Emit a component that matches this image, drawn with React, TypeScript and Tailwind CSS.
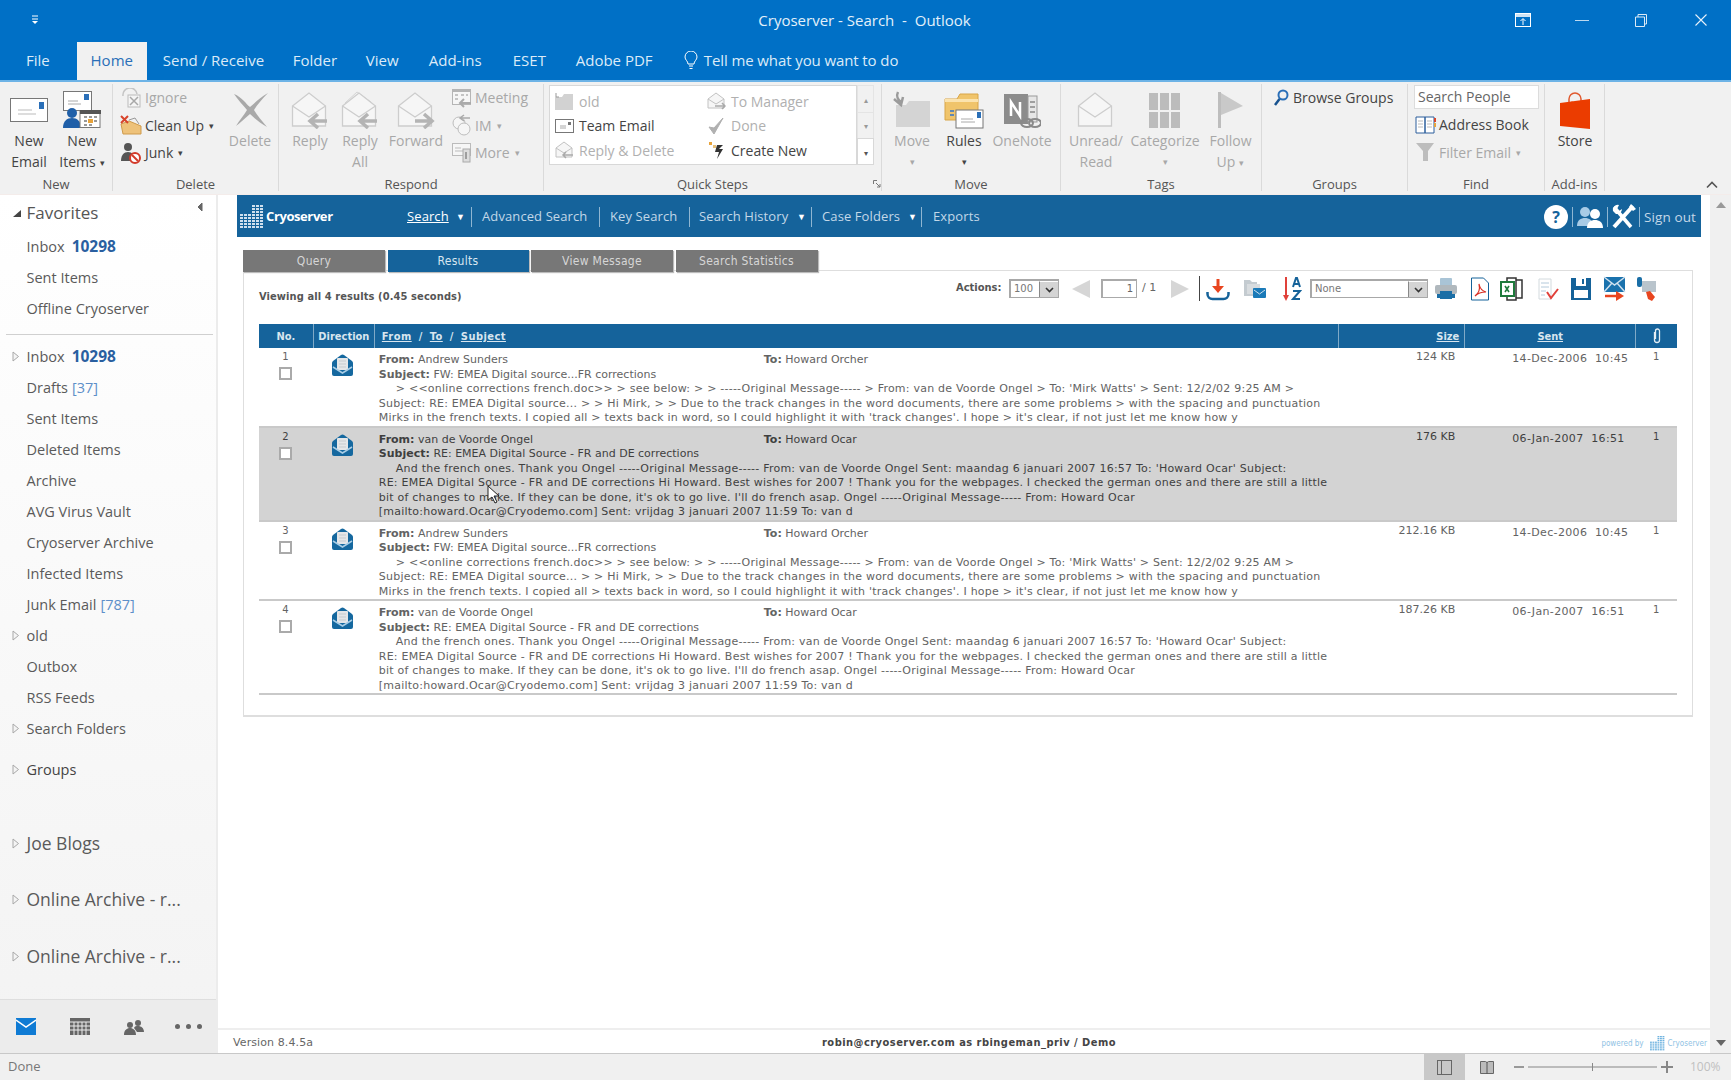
import { ReactNode } from 'react'

const ui = 'font-["Open_Sans","Noto_Sans",sans-serif]'
const web = 'font-["DejaVu_Sans","Noto_Sans",sans-serif]'
const cond = 'font-["DejaVu_Sans_Condensed","DejaVu_Sans",sans-serif]'

function Svg({ w, h, vb, children }: { w: number; h: number; vb: string; children: ReactNode }) {
  return (
    <svg width={w} height={h} viewBox={vb} fill="none" className="shrink-0 block">
      {children}
    </svg>
  )
}

/* ribbon icons */
const NewEmailIcon = () => (
  <Svg w={38} h={24} vb="0 0 38 24">
    <rect x="0.5" y="0.5" width="37" height="23" fill="#fff" stroke="#777" />
    <rect x="29" y="4" width="5" height="7" fill="#2a6fb8" />
    <path d="M8 12h14M8 16h18" stroke="#bbb" />
  </Svg>
)
const NewItemsIcon = () => (
  <Svg w={38} h={38} vb="0 0 38 38">
    <rect x="0.5" y="0.5" width="28" height="19" fill="#fff" stroke="#777" />
    <rect x="21" y="3" width="5" height="6" fill="#2a6fb8" />
    <path d="M5 10h10M5 13h13" stroke="#aaa" />
    <circle cx="9" cy="22" r="5" fill="#1f5fa8" />
    <path d="M0 37c0-7 4-10 9-10s9 3 9 10z" fill="#1f5fa8" />
    <rect x="17" y="19.5" width="20" height="17" fill="#fff" stroke="#777" />
    <rect x="17" y="19" width="21" height="4" fill="#555" />
    <path d="M21 26h3M26 26h3M31 26h3M21 30h3M31 30h3M21 34h3M26 34h3" stroke="#999" strokeWidth="2" />
    <rect x="25" y="28" width="5" height="4" fill="#e8a33a" />
  </Svg>
)
const IgnoreIcon = () => (
  <Svg w={22} h={20} vb="0 0 22 20">
    <path d="M3 8a7 7 0 0 1 14-2" stroke="#c4c4c4" strokeWidth="1.5" />
    <rect x="8" y="7" width="12" height="12" fill="#f5f5f5" stroke="#bbb" />
    <path d="M10 9l8 8M18 9l-8 8" stroke="#a8a8a8" strokeWidth="1.5" />
  </Svg>
)
const CleanUpIcon = () => (
  <Svg w={22} h={20} vb="0 0 22 20">
    <path d="M1 9l8-3 12 5v8H3z" fill="#eec27a" stroke="#cf9b4c" />
    <path d="M1 1l7 7M8 1L1 8" stroke="#d8442b" strokeWidth="2" />
    <path d="M9 5l6-2 4 6" stroke="#999" />
  </Svg>
)
const JunkIcon = () => (
  <Svg w={22} h={22} vb="0 0 22 22">
    <circle cx="8" cy="5" r="4" fill="#555" />
    <path d="M1 19c0-6 3-9 7-9s7 3 7 9z" fill="#555" />
    <circle cx="15" cy="16" r="5" fill="#fff" stroke="#d23a2a" strokeWidth="2" />
    <path d="M12 13l6 6" stroke="#d23a2a" strokeWidth="2" />
  </Svg>
)
const DeleteIcon = () => (
  <Svg w={37} h={36} vb="0 0 37 36">
    <path d="M2 2c8 3 12 10 16 13 5-4 9-9 18-14-6 6-11 12-14 17 3 5 8 11 13 17-7-4-13-9-17-13-5 4-10 9-14 12 3-5 8-11 11-16C11 13 6 8 2 2z" fill="#a9a9a9" />
  </Svg>
)
const MailAction = ({ dir = 'left', extra = false }: { dir?: 'left' | 'right' | 'none'; extra?: boolean }) => (
  <Svg w={38} h={38} vb="0 0 38 38">
    {extra && <path d="M4 12L16 1l14 10" stroke="#d4d4d4" />}
    <path d="M1.5 15L18 2l16.500 13v20h-33z" fill="#f6f6f6" stroke="#cdcdcd" strokeWidth="1.300" />
    <path d="M1.5 15L18 26l16.500-11" stroke="#cdcdcd" strokeWidth="1.300" fill="none" />
    {dir === 'left' && <path d="M36 30H20M27 23l-8 7 8 7" stroke="#b4b4b4" strokeWidth="3.500" />}
    {dir === 'right' && <path d="M18 30h16M27 23l8 7-8 7" stroke="#b4b4b4" strokeWidth="3.500" />}
  </Svg>
)
const MeetingIcon = () => (
  <Svg w={21} h={20} vb="0 0 21 20">
    <rect x="1.5" y="1.500" width="18" height="15" fill="#f6f6f6" stroke="#b5b5b5" />
    <rect x="1" y="1" width="19" height="3" fill="#b5b5b5" />
    <path d="M4 7h3M10 7h3M15 7h2M4 11h3" stroke="#c4c4c4" strokeWidth="2" />
    <path d="M20 15H9M13 11l-4 4 4 4" stroke="#aaa" strokeWidth="2" />
  </Svg>
)
const ImIcon = () => (
  <Svg w={21} h={22} vb="0 0 21 22">
    <circle cx="8" cy="9" r="6" stroke="#bdbdbd" fill="#f6f6f6" />
    <circle cx="13" cy="15" r="6" stroke="#bdbdbd" fill="#f6f6f6" />
    <path d="M19 4H10M13 1L9 4l4 3" stroke="#aaa" strokeWidth="1.500" />
  </Svg>
)
const MoreIcon = () => (
  <Svg w={21} h={21} vb="0 0 21 21">
    <rect x="1.500" y="1.500" width="18" height="12" fill="#f6f6f6" stroke="#bbb" />
    <path d="M4 6h6M4 9h8" stroke="#bbb" />
    <rect x="12" y="7" width="7" height="13" fill="#ddd" stroke="#aaa" />
    <path d="M15 10v7" stroke="#888" strokeWidth="1.500" />
  </Svg>
)
const FolderGray = () => (
  <Svg w={18} h={17} vb="0 0 18 17">
    <path d="M3 4h4l2-3h9v16H0V4z" fill="#d2d2d2" />
    <path d="M1 0v4h3" stroke="#999" />
  </Svg>
)
const TeamEmailIcon = () => (
  <Svg w={19} h={14} vb="0 0 19 14">
    <rect x="0.500" y="0.500" width="18" height="13" fill="#fff" stroke="#777" />
    <rect x="13" y="3" width="3" height="3" fill="#777" />
    <path d="M5 7h6M5 9h6" stroke="#aaa" />
  </Svg>
)
const ReplyDeleteIcon = () => (
  <Svg w={19} h={18} vb="0 0 19 18">
    <path d="M1 7l8-6 8 6v9H1z" fill="#f6f6f6" stroke="#c2c2c2" />
    <path d="M1 7l8 5 8-5" stroke="#c2c2c2" />
    <path d="M18 14H8M11 11l-3 3 3 3" stroke="#aaa" strokeWidth="1.500" />
  </Svg>
)
const ToManagerIcon = () => (
  <Svg w={19} h={18} vb="0 0 19 18">
    <path d="M1 7l8-6 8 6v9H1z" fill="#f6f6f6" stroke="#c2c2c2" />
    <path d="M1 7l8 5 8-5" stroke="#c2c2c2" />
    <path d="M8 14h10M15 11l3 3-3 3" stroke="#aaa" strokeWidth="1.500" />
  </Svg>
)
const DoneIcon = () => (
  <Svg w={17} h={18} vb="0 0 17 18">
    <path d="M1 10l5 7L15 1 6 11z" fill="#b0b0b0" stroke="#b0b0b0" />
  </Svg>
)
const CreateNewIcon = () => (
  <Svg w={17} h={19} vb="0 0 17 19">
    <rect x="1" y="1" width="3" height="3" fill="#e8a33a" />
    <rect x="5" y="4" width="3" height="3" fill="#e8c07a" />
    <path d="M15 4H9L7 11h4l-2 7 6-10h-4z" fill="#333" />
  </Svg>
)
const MoveIcon = () => (
  <Svg w={38} h={38} vb="0 0 38 38">
    <path d="M3 14h10l3-4h21v26H3z" fill="#d4d4d4" />
    <path d="M5 1c-2 4 0 8 3 10M1 8l7 6 2-8" stroke="#9b9b9b" strokeWidth="2.500" />
  </Svg>
)
const RulesIcon = () => (
  <Svg w={40} h={38} vb="0 0 40 38">
    <path d="M1 8h12l3-5h18v26H1z" fill="#f0c46b" stroke="#d8a548" />
    <rect x="1" y="8" width="33" height="3" fill="#fbe3ae" />
    <rect x="12" y="19" width="27" height="18" fill="#fff" stroke="#777" />
    <rect x="33" y="21" width="4" height="6" fill="#2a6fb8" />
    <path d="M17 28h12M17 31h14" stroke="#aaa" />
    <path d="M6 20h4M6 24h4" stroke="#5f88b5" strokeWidth="2" />
  </Svg>
)
const OneNoteIcon = () => (
  <Svg w={38} h={38} vb="0 0 38 38">
    <rect x="1" y="3" width="24" height="30" fill="#8c8c8c" />
    <path d="M8 25V11l9 14V11" stroke="#fff" strokeWidth="2.500" />
    <rect x="25" y="5" width="9" height="26" fill="#e6e6e6" stroke="#999" />
    <path d="M27 11h5M27 16h5M27 21h5" stroke="#888" strokeWidth="1.500" />
    <ellipse cx="24" cy="32" rx="6" ry="4" stroke="#8a8a8a" strokeWidth="2" />
    <ellipse cx="32" cy="32" rx="6" ry="4" stroke="#8a8a8a" strokeWidth="2" />
  </Svg>
)
const CategorizeIcon = () => (
  <Svg w={32} h={35} vb="0 0 32 35">
    <path d="M0 0h9v17H0zM11 0h9v17h-9zM22 0h9v17h-9zM0 19h9v16H0zM11 19h9v16h-9zM22 19h9v16h-9z" fill="#bcbcbc" />
  </Svg>
)
const FollowIcon = () => (
  <Svg w={27} h={36} vb="0 0 27 36">
    <path d="M1 0h3v36H1z" fill="#bdbdbd" />
    <path d="M4 1l22 13L4 23z" fill="#c9c9c9" />
  </Svg>
)
const BrowseIcon = () => (
  <Svg w={16} h={18} vb="0 0 16 18">
    <circle cx="10" cy="6" r="4.500" stroke="#2a6fb8" strokeWidth="2" />
    <path d="M6.500 10L2 16" stroke="#17528f" strokeWidth="2.500" />
  </Svg>
)
const AddressBookIcon = () => (
  <Svg w={21} h={18} vb="0 0 21 18">
    <path d="M1 1h9v16H1zM10 1h9v16h-9z" fill="#fff" stroke="#2d5f9c" />
    <path d="M3 5h5M3 8h5M3 11h5M12 5h5M12 8h5M12 11h5" stroke="#bbb" />
    <path d="M19 2h2v4h-2z" fill="#d8442b" />
    <path d="M19 7h2v4h-2z" fill="#e8a33a" />
  </Svg>
)
const FilterIcon = () => (
  <Svg w={18} h={18} vb="0 0 18 18">
    <path d="M0 0h18l-6 8v10H7V8z" fill="#bdbdbd" />
  </Svg>
)
const StoreIcon = () => (
  <Svg w={31} h={37} vb="0 0 31 37">
    <path d="M9 10V7a6 6 0 0 1 12 0v3" stroke="#e05a30" strokeWidth="1.500" />
    <path d="M11 9h2v4h-2zM18 9h2v4h-2z" fill="#f7b9a0" />
    <path d="M0 11l30-4v30L0 34z" fill="#eb3c00" />
  </Svg>
)

/* ribbon pieces */
function Big({ w, icon, lines, off = false, caret = false, inlineCaret = false }: { w: number; icon: ReactNode; lines: string[]; off?: boolean; caret?: boolean; inlineCaret?: boolean }) {
  return (
    <div style={{ width: w }} className={`shrink-0 flex flex-col items-center pt-[5px] ${off ? 'text-[#a8a8a8]' : 'text-[#444]'}`}>
      <div className="h-[42px] flex items-center justify-center">{icon}</div>
      {lines.map((l, i) => (
        <div key={l} className="leading-[20.500px] whitespace-nowrap">
          {l}
          {inlineCaret && i === lines.length - 1 && <span className="ml-[4px] text-[9px] align-middle">▾</span>}
        </div>
      ))}
      {caret && <div className="leading-[20.500px] text-[9px]">▾</div>}
    </div>
  )
}

function Small({ icon, label, off = false, caret = false, iw = 22 }: { icon: ReactNode; label: string; off?: boolean; caret?: boolean; iw?: number }) {
  return (
    <div className={`h-[27.500px] flex items-center whitespace-nowrap ${off ? 'text-[#a8a8a8]' : 'text-[#444]'}`}>
      <div style={{ width: iw }} className="flex justify-center">
        {icon}
      </div>
      <span className="ml-[3px]">{label}</span>
      {caret && <span className="ml-[5px] text-[9px]">▾</span>}
    </div>
  )
}

function Group({ w, label, children }: { w: number; label: string; children: ReactNode }) {
  return (
    <div style={{ width: w }} className="shrink-0 flex flex-col border-r border-[#dadada]">
      <div className="h-[89px] shrink-0 flex">{children}</div>
      <div className="mt-auto h-[14px] leading-[14px] text-center text-[13px] text-[#555]">{label}</div>
    </div>
  )
}

function QuickItem({ icon, label, off = false }: { icon: ReactNode; label: string; off?: boolean }) {
  return (
    <div className={`h-[24.500px] flex items-center whitespace-nowrap ${off ? 'text-[#b0b0b0]' : 'text-[#444]'}`}>
      <div className="w-[20px] flex justify-center">{icon}</div>
      <span className="ml-[5px]">{label}</span>
    </div>
  )
}

function Ribbon() {
  return (
    <div className={`${ui} text-[14px] h-[115px] bg-[#f1f1f1] flex pt-[2px] pb-[3px] border-t-2 border-[#6db3e6] shrink-0 border-b border-b-[#f4ecea]`}>
      <Group w={113} label="New">
        <div className="w-[10px]" />
        <Big w={38} icon={<NewEmailIcon />} lines={['New', 'Email']} />
        <div className="w-[15px]" />
        <Big w={38} icon={<NewItemsIcon />} lines={['New', 'Items']} inlineCaret />
      </Group>
      <Group w={166} label="Delete">
        <div className="w-[7px]" />
        <div className="w-[108px]">
          <Small icon={<IgnoreIcon />} label="Ignore" off />
          <Small icon={<CleanUpIcon />} label="Clean Up" caret />
          <Small icon={<JunkIcon />} label="Junk" caret />
        </div>
        <Big w={44} icon={<DeleteIcon />} lines={['Delete']} off />
      </Group>
      <Group w={265} label="Respond">
        <div className="w-[6px]" />
        <Big w={50} icon={<MailAction />} lines={['Reply']} off />
        <Big w={50} icon={<MailAction extra />} lines={['Reply', 'All']} off />
        <Big w={62} icon={<MailAction dir="right" />} lines={['Forward']} off />
        <div className="w-[3px]" />
        <div>
          <Small icon={<MeetingIcon />} label="Meeting" off />
          <Small icon={<ImIcon />} label="IM" off caret />
          <Small icon={<MoreIcon />} label="More" off caret />
        </div>
      </Group>
      <Group w={338} label="Quick Steps">
        <div className="ml-[5px] mt-[1px] h-[80px] w-[325px] flex">
          <div className="w-[308px] h-[80px] bg-white border border-[#d8d8d8] pl-[4px] pt-[3px] grid grid-cols-[152px_1fr]">
            <div>
              <QuickItem icon={<FolderGray />} label="old" off />
              <QuickItem icon={<TeamEmailIcon />} label="Team Email" />
              <QuickItem icon={<ReplyDeleteIcon />} label="Reply & Delete" off />
            </div>
            <div>
              <QuickItem icon={<ToManagerIcon />} label="To Manager" off />
              <QuickItem icon={<DoneIcon />} label="Done" off />
              <QuickItem icon={<CreateNewIcon />} label="Create New" />
            </div>
          </div>
          <div className="w-[17px] flex flex-col text-[8px] text-[#999] text-center">
            <div className="h-[28px] leading-[28px] border border-[#e4e4e4]">▴</div>
            <div className="h-[25px] leading-[25px] border-x border-[#e4e4e4]">▾</div>
            <div className="h-[27px] leading-[27px] bg-white border border-[#d8d8d8] text-[#555]">▾</div>
          </div>
        </div>
        <svg width="8" height="8" viewBox="0 0 8 8" fill="none" className="ml-[-1px] mt-[96px] shrink-0">
          <path d="M.5 4V.5H4M7 7L3 3M7 4v3H4" stroke="#777" />
        </svg>
      </Group>
      <Group w={179} label="Move">
        <Big w={60} icon={<MoveIcon />} lines={['Move']} off caret />
        <Big w={44} icon={<RulesIcon />} lines={['Rules']} caret />
        <Big w={72} icon={<OneNoteIcon />} lines={['OneNote']} off />
      </Group>
      <Group w={201} label="Tags">
        <Big w={70} icon={<MailAction dir="none" />} lines={['Unread/', 'Read']} off />
        <Big w={68} icon={<CategorizeIcon />} lines={['Categorize']} off caret />
        <Big w={63} icon={<FollowIcon />} lines={['Follow', 'Up']} off inlineCaret />
      </Group>
      <Group w={146} label="Groups">
        <div className="pl-[9px]">
          <Small icon={<BrowseIcon />} label="Browse Groups" iw={19} />
        </div>
      </Group>
      <Group w={137} label="Find">
        <div className="pl-[6px]">
          <div className="w-[125px] h-[24px] mt-[1px] mb-[2px] bg-white border border-[#dcdcdc] pl-[3px] leading-[22px] text-[#666]">Search People</div>
          <Small icon={<AddressBookIcon />} label="Address Book" iw={22} />
          <Small icon={<FilterIcon />} label="Filter Email" off caret iw={22} />
        </div>
      </Group>
      <Group w={60} label="Add-ins">
        <Big w={60} icon={<StoreIcon />} lines={['Store']} />
      </Group>
      <div className="flex-1 flex items-end justify-end pr-[13px] pb-[2px]">
        <svg width="12" height="8" viewBox="0 0 12 8" fill="none">
          <path d="M1 6.500l5-5 5 5" stroke="#555" strokeWidth="1.600" />
        </svg>
      </div>
    </div>
  )
}

/* left navigation */
function Arrow() {
  return (
    <svg width="8" height="11" viewBox="0 0 8 11" fill="none" className="shrink-0">
      <path d="M1 1l5.500 4.500L1 10z" fill="#f4f4f4" stroke="#a8a8a8" />
    </svg>
  )
}

function Folder({ label, count, unread, arrow = false, big = false, dark = false, mt = 0 }: { label: string; count?: string; unread?: string; arrow?: boolean; big?: boolean; dark?: boolean; mt?: number }) {
  return (
    <div style={{ marginTop: mt }} className={`h-[31px] flex items-center shrink-0 whitespace-nowrap ${big ? 'text-[17.500px]' : 'text-[14.500px]'} ${dark ? 'text-[#444]' : 'text-[#5a5a5a]'}`}>
      <div className="w-[26.500px] pl-[12px]">{arrow && <Arrow />}</div>
      <span>{label}</span>
      {unread && <span className="ml-[7px] font-bold text-[15.500px] text-[#2a5fa0]">{unread}</span>}
      {count && <span className="ml-[4px] text-[#5d8fc9]">[{count}]</span>}
    </div>
  )
}

function Sidebar() {
  return (
    <aside className={`${ui} w-[218px] shrink-0 flex flex-col bg-linear-to-b from-white to-[#f3f3f3] border-r-2 border-[#ececec]`}>
      <div className="h-[36px] flex items-center shrink-0 text-[#555] text-[17px]">
        <div className="w-[26.500px] pl-[12px]">
          <svg width="10" height="9" viewBox="0 0 10 9">
            <path d="M9 1v7H1z" fill="#444" />
          </svg>
        </div>
        <span>Favorites</span>
        <svg width="8" height="10" viewBox="0 0 8 10" className="ml-auto mr-[12px] mb-[12px]">
          <path d="M6 1L2 5l4 4z" fill="#666" stroke="#666" />
        </svg>
      </div>
      <Folder label="Inbox" unread="10298" />
      <Folder label="Sent Items" />
      <Folder label="Offline Cryoserver" />
      <div className="mt-[10px] mb-[6px] ml-[6px] mr-[3px] border-t border-[#d0d0d0] shrink-0" />
      <Folder label="Inbox" unread="10298" arrow />
      <Folder label="Drafts" count="37" />
      <Folder label="Sent Items" />
      <Folder label="Deleted Items" />
      <Folder label="Archive" />
      <Folder label="AVG Virus Vault" />
      <Folder label="Cryoserver Archive" />
      <Folder label="Infected Items" />
      <Folder label="Junk Email" count="787" />
      <Folder label="old" arrow />
      <Folder label="Outbox" />
      <Folder label="RSS Feeds" />
      <Folder label="Search Folders" arrow />
      <Folder label="Groups" arrow dark mt={10} />
      <Folder label="Joe Blogs" arrow big mt={43} />
      <Folder label="Online Archive - r..." arrow big mt={25} />
      <Folder label="Online Archive - r..." arrow big mt={26} />
      <div className="mt-auto h-[54px] bg-[#ececec] border-t border-[#dedede] flex items-center shrink-0">
        <svg width="20" height="17" viewBox="0 0 20 17" className="ml-[16px]">
          <rect width="20" height="17" fill="#0f7bd4" />
          <path d="M0 2l10 7 10-7" stroke="#fff" strokeWidth="1.500" fill="none" />
        </svg>
        <svg width="20" height="17" viewBox="0 0 20 17" className="ml-[34px]">
          <rect width="20" height="17" fill="#666" />
          <path d="M0 4h20M0 8h20M0 12h20M4 4v13M8 4v13M12 4v13M16 4v13" stroke="#ececec" />
        </svg>
        <svg width="20" height="16" viewBox="0 0 20 16" className="ml-[34px]">
          <circle cx="6" cy="6" r="3" fill="#666" />
          <circle cx="14" cy="4" r="3" fill="#666" />
          <path d="M0 16c0-5 3-7 6-7s6 2 6 7zM10 9c1-2 2-2 4-2 3 0 6 2 6 6h-7z" fill="#666" />
        </svg>
        <div className="ml-[31px] flex gap-[6px]">
          <span className="w-[5px] h-[5px] rounded-full bg-[#666]" />
          <span className="w-[5px] h-[5px] rounded-full bg-[#666]" />
          <span className="w-[5px] h-[5px] rounded-full bg-[#666]" />
        </div>
      </div>
    </aside>
  )
}

/* cryoserver page */
function CryoLogo({ color = '#cfe0ee', w = 24 }: { color?: string; w?: number }) {
  const cells: ReactNode[] = []
  for (let i = 0; i < 8; i++) {
    for (let j = 0; j < 6; j++) {
      if (i < 3 && j < 3) continue
      cells.push(<rect key={`${i}-${j}`} x={j * 4} y={i * 3} width="3" height="2" fill={color} />)
    }
  }
  return (
    <svg width={w} height={w} viewBox="0 0 24 24" className="shrink-0">
      {cells}
    </svg>
  )
}

function NavSep() {
  return <div className="w-px h-[20px] bg-[#8fb6d2]" />
}

function NavItem({ w, ml, children, className = '' }: { w: number; ml: number; children: ReactNode; className?: string }) {
  return (
    <span style={{ width: w, marginLeft: ml }} className={`whitespace-nowrap ${className}`}>
      {children}
    </span>
  )
}

const NavCaret = ({ ml }: { ml: number }) => <span style={{ marginLeft: ml }} className="text-[9px] text-white">▼</span>

function CryoNav() {
  return (
    <div className={`${ui} ml-[19px] mr-[9px] h-[42px] pt-[2px] bg-[#15639b] flex items-center text-[13px] tracking-[0.1px] text-[#c3d8e8] shrink-0`}>
      <div className="ml-[3px]">
        <CryoLogo />
      </div>
      <span className="ml-[2px] w-[71px] font-bold text-white text-[13px] tracking-[-0.4px]">Cryoserver</span>
      <NavItem w={42} ml={70} className="underline text-white">Search</NavItem>
      <NavCaret ml={7} />
      <div className="ml-[6px]"><NavSep /></div>
      <NavItem w={107} ml={10}>Advanced Search</NavItem>
      <div className="ml-[10px]"><NavSep /></div>
      <NavItem w={68} ml={10}>Key Search</NavItem>
      <div className="ml-[11px]"><NavSep /></div>
      <NavItem w={90} ml={9}>Search History</NavItem>
      <NavCaret ml={8} />
      <div className="ml-[5px]"><NavSep /></div>
      <NavItem w={81} ml={10}>Case Folders</NavItem>
      <NavCaret ml={5} />
      <div className="ml-[4px]"><NavSep /></div>
      <NavItem w={46} ml={11}>Exports</NavItem>
      <div className="ml-auto flex items-center">
        <span className="w-[24px] h-[24px] rounded-full bg-white text-[#15639b] font-bold text-[16px] leading-[24px] text-center">?</span>
        <div className="ml-[4px]"><NavSep /></div>
        <svg width="26" height="22" viewBox="0 0 26 22" className="ml-[4px]">
          <circle cx="8" cy="6" r="5" fill="#a8cbe6" />
          <path d="M0 20c0-6 4-8 8-8s8 2 8 8z" fill="#a8cbe6" />
          <circle cx="18" cy="8" r="5" fill="#fff" />
          <path d="M10 22c0-6 4-8 8-8s8 2 8 8z" fill="#fff" />
        </svg>
        <div className="ml-[4px]"><NavSep /></div>
        <svg width="25" height="26" viewBox="0 0 25 26" fill="none" className="ml-[3px]">
          <path d="M3 3l17 20" stroke="#fff" strokeWidth="3.500" />
          <path d="M2 7a5 5 0 0 1 6-6L6 5l2 2 3-2a5 5 0 0 1-6 5z" fill="#fff" />
          <path d="M22 2L3 23" stroke="#fff" strokeWidth="4" />
          <path d="M20 0l5 5-3 2-4-4z" fill="#fff" />
        </svg>
        <div className="ml-[3px]"><NavSep /></div>
        <span className="ml-[4px] mr-[5px] w-[52px] whitespace-nowrap text-[13.500px]">Sign out</span>
      </div>
    </div>
  )
}

const Tab = ({ label, active = false, w }: { label: string; active?: boolean; w: number }) => (
  <div style={{ width: w }} className={`h-[22px] leading-[22px] text-center text-[12px] tracking-[0.3px] shadow-[1px_1px_1px_#bbb] ${active ? 'bg-[#15639b] text-[#d8e6f0]' : 'bg-[#777] text-[#d6d6d6]'}`}>
    {label}
  </div>
)

function Dropdown({ w, label }: { w: number; label: string }) {
  return (
    <div style={{ width: w }} className="h-[19px] border-2 border-b border-r border-[#a8a8a8] flex text-[10px] text-[#777] shrink-0 bg-white">
      <span className="flex-1 pl-[3px] leading-[16px]">{label}</span>
      <span className="w-[19px] bg-[#d4d4d4] border-l border-[#888] border-t border-t-white flex items-center justify-center">
        <svg width="9" height="6" viewBox="0 0 9 6" fill="none">
          <path d="M1 1l3.500 3.500L8 1" stroke="#333" strokeWidth="1.600" />
        </svg>
      </span>
    </div>
  )
}

function Toolbar() {
  return (
    <div className="ml-auto mr-[20px] mt-[7px] flex items-center h-[21px] text-[#666]">
      <span className={`${cond} w-[49px] font-bold text-[11px] text-[#555] whitespace-nowrap`}>Actions:</span>
      <div className="ml-[4px]"><Dropdown w={50} label="100" /></div>
      <svg width="20" height="20" viewBox="0 0 20 20" className="ml-[12px]"><path d="M19 1v18L1 10z" fill="#d6d6d6" /></svg>
      <div className="ml-[10px] w-[36px] h-[19px] border-2 border-b border-r border-[#aaa] text-right pr-[3px] text-[10px] leading-[16px]">1</div>
      <span className="ml-[5px] w-[28px] text-[11px]">/ 1</span>
      <svg width="20" height="20" viewBox="0 0 20 20"><path d="M1 1v18l18-9z" fill="#d6d6d6" /></svg>
      <div className="ml-[9px] w-px h-[25px] bg-[#444]" />
      <svg width="24" height="24" viewBox="0 0 24 24" fill="none" className="ml-[6px]">
        <path d="M12 2v10" stroke="#e8451f" strokeWidth="3" />
        <path d="M6 9l6 7 6-7z" fill="#e8451f" />
        <path d="M1.500 15v2a5 5 0 0 0 5 5h11a5 5 0 0 0 5-5v-2" stroke="#156299" strokeWidth="2.500" />
      </svg>
      <svg width="22" height="20" viewBox="0 0 22 20" className="ml-[14px]">
        <path d="M0 1h6l2 2h5v8H9v6H0z" fill="#c4cbd0" />
        <path d="M3 5h13v4H9v6H3z" fill="#d8dcdf" />
        <rect x="9" y="9" width="13" height="10" rx="1" fill="#1a7ab8" />
        <path d="M10 11l5.500 4 5.500-4" stroke="#cfe0ee" fill="none" />
      </svg>
      <svg width="19" height="26" viewBox="0 0 19 26" fill="none" className="ml-[17px]">
        <path d="M3 1v20" stroke="#e0413a" strokeWidth="2" />
        <path d="M0 19l3 6 3-6z" fill="#e0413a" />
        <path d="M10 11l3-9h1l3 9M11 8h5" stroke="#156299" strokeWidth="2" />
        <path d="M10 15h7l-7 8h7" stroke="#156299" strokeWidth="2" />
      </svg>
      <div className="ml-[8px]"><Dropdown w={118} label="None" /></div>
      <svg width="24" height="24" viewBox="0 0 24 24" className="ml-[6px]">
        <rect x="6" y="1" width="12" height="8" rx="1" fill="#a9c4d6" />
        <rect x="1" y="8" width="22" height="9" rx="2" fill="#b0b8bd" />
        <rect x="3" y="17" width="18" height="4" fill="#1a6ea6" />
        <rect x="6" y="14" width="12" height="8" fill="#1a6ea6" />
      </svg>
      <svg width="20" height="24" viewBox="0 0 20 24" fill="none" className="ml-[12px]">
        <path d="M1.500 1h12l5 5v17h-17z" fill="#fff" stroke="#156299" />
        <path d="M5 19c4-3 5-8 4-12 1 5 3 7 7 8-5 0-8 1-11 4z" stroke="#d93025" strokeWidth="1.200" />
      </svg>
      <svg width="23" height="24" viewBox="0 0 23 24" className="ml-[10px]">
        <rect x="14" y="3" width="8" height="18" fill="#fff" stroke="#333" strokeWidth="1.500" />
        <rect x="7" y="1" width="9" height="22" fill="#fff" stroke="#333" strokeWidth="1.500" />
        <rect x="1" y="5" width="13" height="14" fill="#fff" stroke="#1e7a3c" strokeWidth="2" />
        <path d="M5 9l4 6M9 9l-4 6" stroke="#1e7a3c" strokeWidth="1.600" />
      </svg>
      <svg width="21" height="22" viewBox="0 0 21 22" fill="none" className="ml-[15px]">
        <path d="M1 1h12v20H1z" stroke="#d3dade" />
        <path d="M3 5h8M3 9h8M3 13h5M3 17h4" stroke="#b4cadb" />
        <path d="M9 14l4 6 7-9" stroke="#e0413a" strokeWidth="2" />
      </svg>
      <svg width="20" height="22" viewBox="0 0 20 22" className="ml-[12px]">
        <path d="M0 0h20v22H0z" fill="#156299" />
        <rect x="5" y="0" width="10" height="8" fill="#fff" />
        <rect x="11" y="1" width="2" height="5" fill="#156299" />
        <rect x="3" y="12" width="14" height="8" fill="#fff" />
      </svg>
      <svg width="23" height="26" viewBox="0 0 23 26" fill="none" className="ml-[12px]">
        <rect x="1" y="1" width="21" height="15" fill="#1a72ad" />
        <path d="M1 1l10.500 8L22 1M1 16l8-9M22 16l-8-9" stroke="#cfe0ee" strokeWidth="1.500" />
        <path d="M2 20h14" stroke="#e8451f" strokeWidth="2.500" />
        <path d="M13 15l8 5-8 5z" fill="#e8451f" />
      </svg>
      <svg width="20" height="26" viewBox="0 0 20 26" className="ml-[11px]">
        <rect x="0" y="1" width="5" height="10" rx="2" fill="#1a6ea6" />
        <rect x="5" y="5" width="14" height="11" fill="#b9c4cc" />
        <path d="M9 16l4-1 5 6-3 4-4-2z" fill="#e8451f" />
      </svg>
    </div>
  )
}

const DirIcon = () => (
  <svg width="23" height="23" viewBox="0 0 23 23">
    <path d="M1 9q0-1 1-2l8-6q1.500-1 3 0l8 6q1 1 1 2v11q0 2-2 2H3q-2 0-2-2z" fill="#15689f" />
    <rect x="6" y="4" width="11" height="12" rx="1" fill="#e4e6e8" />
    <path d="M8 7h7M8 10h7M8 13h7" stroke="#c6cbcf" />
    <path d="M2 13l9.500 6 9.500-6" stroke="#a8cde6" strokeWidth="1.500" fill="none" />
  </svg>
)

type Mail = { no: number; from: string; to: string; subject: string; lines: string[]; size: string; sent: string; selected?: boolean }

const mirk = [
  "> <<online corrections french.doc>> > see below: > > -----Original Message----- > From: van de Voorde Ongel > To: 'Mirk Watts' > Sent: 12/2/02 9:25 AM >",
  'Subject: RE: EMEA Digital source... > > Hi Mirk, > > Due to the track changes in the word documents, there are some problems > with the spacing and punctuation',
  "Mirks in the french texts. I copied all > texts back in word, so I could highlight it with 'track changes'. I hope > it's clear, if not just let me know how y",
]
const ongel = [
  "And the french ones. Thank you Ongel -----Original Message----- From: van de Voorde Ongel Sent: maandag 6 januari 2007 16:57 To: 'Howard Ocar' Subject:",
  'RE: EMEA Digital Source - FR and DE corrections Hi Howard. Best wishes for 2007 ! Thank you for the webpages. I checked the german ones and there are still a little',
  "bit of changes to make. If they can be done, it's ok to go live. I'll do french asap. Ongel -----Original Message----- From: Howard Ocar",
  '[mailto:howard.Ocar@Cryodemo.com] Sent: vrijdag 3 januari 2007 11:59 To: van d',
]

const mails: Mail[] = [
  { no: 1, from: 'Andrew Sunders', to: 'Howard Orcher', subject: 'FW: EMEA Digital source...FR corrections', lines: mirk, size: '124 KB', sent: '14-Dec-2006  10:45' },
  { no: 2, from: 'van de Voorde Ongel', to: 'Howard Ocar', subject: 'RE: EMEA Digital Source - FR and DE corrections', lines: ongel, size: '176 KB', sent: '06-Jan-2007  16:51', selected: true },
  { no: 3, from: 'Andrew Sunders', to: 'Howard Orcher', subject: 'FW: EMEA Digital source...FR corrections', lines: mirk, size: '212.16 KB', sent: '14-Dec-2006  10:45' },
  { no: 4, from: 'van de Voorde Ongel', to: 'Howard Ocar', subject: 'RE: EMEA Digital Source - FR and DE corrections', lines: ongel, size: '187.26 KB', sent: '06-Jan-2007  16:51' },
]

function Row({ mail }: { mail: Mail }) {
  return (
    <div className={`flex border-b-2 border-[#c9c9c9] ${mail.selected ? 'bg-[#d3d3d3] text-[#3f3f3f]' : 'text-[#636363]'}`}>
      <div className="w-[55px] flex flex-col items-center pt-[3px] pr-[2px]">
        <span className="leading-[12px] text-[10px]">{mail.no}</span>
        <span className="mt-[4px] w-[13px] h-[13px] bg-white border-2 border-[#aaa]" />
      </div>
      <div className="w-[61px] flex justify-center pt-[6px] pr-[3px]">
        <div><DirIcon /></div>
      </div>
      <div className="w-[966px] pl-[4px] pt-[5px] text-[11px] leading-[14.500px] whitespace-nowrap">
        <div className="flex">
          <span className="w-[385px]"><b>From:</b> {mail.from}</span>
          <span><b>To:</b> {mail.to}</span>
        </div>
        <div><b>Subject:</b> {mail.subject}</div>
        {mail.lines.map((l, i) => (
          <div key={l} className={`tracking-[0.22px] ${i === 0 ? 'pl-[17px]' : ''}`}>{l}</div>
        ))}
      </div>
      <div className="w-[116px] text-right pt-[2px] text-[11px] leading-[14px] whitespace-nowrap">{mail.size}</div>
      <div className="w-[181px] pt-[4px] pl-[57px] text-[11px] tracking-[0.35px] leading-[14px] whitespace-pre">{mail.sent}</div>
      <div className="w-[41px] pt-[2px] pl-[17px] text-[10px] leading-[14px]">1</div>
    </div>
  )
}

function HeaderCell({ w, children, className = '' }: { w: number; children?: ReactNode; className?: string }) {
  return (
    <div style={{ width: w }} className={`h-full flex items-center font-bold pt-[3px] border-r border-[#7fa9c7] last:border-r-0 ${className}`}>
      {children}
    </div>
  )
}

function Results() {
  return (
    <div className={`${web} relative z-0 -mt-[2px] ml-[25px] w-[1450px] h-[447px] border border-b-2 border-[#dedede] px-[15px] shrink-0`}>
      <div className="h-[53px] flex items-start">
        <span className={`${cond} mt-[19px] text-[11px] leading-[14px] font-bold tracking-[0.1px] text-[#555] whitespace-nowrap`}>Viewing all 4 results (0.45 seconds)</span>
        <Toolbar />
      </div>
      <div className={`${cond} h-[24px] bg-[#15639b] flex text-[11px] text-[#d9e6ef]`}>
        <HeaderCell w={55} className="justify-center">No.</HeaderCell>
        <HeaderCell w={61} className="justify-center">Direction</HeaderCell>
        <HeaderCell w={966} className="pl-[7px] gap-[7px] tracking-[0.45px]">
          <u>From</u> / <u>To</u> / <u>Subject</u>
        </HeaderCell>
        <HeaderCell w={126} className="justify-end pr-[5px]"><u>Size</u></HeaderCell>
        <HeaderCell w={171} className="justify-center"><u>Sent</u></HeaderCell>
        <HeaderCell w={41} className="justify-center">
          <svg width="10" height="16" viewBox="0 0 10 16" fill="none" className="-mt-[3px]">
            <path d="M2.500 4v8a2.500 2.500 0 0 0 5 0V3a2 2 0 0 0-4 0v8" stroke="#e4eef5" strokeWidth="1.300" />
          </svg>
        </HeaderCell>
      </div>
      {mails.map((m) => (
        <Row key={m.no} mail={m} />
      ))}
      <svg width="13" height="19" viewBox="0 0 13 19" className="absolute left-[243px] top-[214px]">
        <path d="M1 1v14l4-3 3 6 2-1-3-6h5z" fill="#fff" stroke="#222" />
      </svg>
    </div>
  )
}

function Main() {
  return (
    <main className="flex-1 flex flex-col bg-white min-w-0">
      <CryoNav />
      <div className={`${cond} relative z-10 ml-[25px] mt-[13px] flex gap-[2.500px] shrink-0`}>
        <Tab label="Query" w={142} />
        <Tab label="Results" w={141} active />
        <Tab label="View Message" w={142} />
        <Tab label="Search Statistics" w={142} />
      </div>
      <Results />
      <div className={`${web} mt-auto h-[25px] pt-[4px] border-t-2 border-[#eeeeee] grid grid-cols-3 items-center text-[11px] text-[#666] shrink-0`}>
        <span className="pl-[15px] tracking-[0.1px]">Version 8.4.5a</span>
        <span className={`${cond} text-center font-bold tracking-[0.47px] text-[#444] whitespace-nowrap pl-[10px]`}>robin@cryoserver.com as rbingeman_priv / Demo</span>
        <span className={`${cond} flex items-center justify-end pr-[3px] text-[8px] text-[#8fc2e4]`}>
          powered by
          <span className="ml-[6px] mr-[3px]"><CryoLogo color="#6fb3e0" w={15} /></span>
          Cryoserver
        </span>
      </div>
    </main>
  )
}

function Scrollbar() {
  return (
    <div className="w-[21px] shrink-0 bg-[#f0f0f0] flex flex-col items-center justify-between py-[7px] text-[#777]">
      <svg width="10" height="6" viewBox="0 0 10 6"><path d="M5 0l5 6H0z" fill="#999" /></svg>
      <svg width="10" height="6" viewBox="0 0 10 6"><path d="M5 6l5-6H0z" fill="#666" /></svg>
    </div>
  )
}

function StatusBar() {
  return (
    <div className={`${ui} h-[27px] shrink-0 bg-[#f0f0f0] border-t border-[#c8c8c8] flex items-center text-[13px] text-[#777]`}>
      <span className="ml-[8px]">Done</span>
      <div className="ml-auto w-[41px] h-full bg-[#c8c8c8] flex items-center justify-center">
        <svg width="15" height="15" viewBox="0 0 15 15" fill="none">
          <rect x="0.500" y="0.500" width="14" height="14" stroke="#666" />
          <path d="M4.500 1v13" stroke="#666" />
        </svg>
      </div>
      <svg width="14" height="15" viewBox="0 0 14 15" fill="none" className="ml-[15px]">
        <path d="M.5 1.500h5l1.500 1 1.500-1h5v12h-13z" fill="#bbb" stroke="#666" />
        <path d="M7 2v12" stroke="#555" />
      </svg>
      <div className="ml-[20px] w-[10px] h-[2px] bg-[#999]" />
      <div className="relative ml-[4px] w-[129px] h-[2px] bg-[#bbb]">
        <div className="absolute left-[64px] -top-[3px] w-px h-[8px] bg-[#888]" />
      </div>
      <svg width="12" height="12" viewBox="0 0 12 12" className="ml-[4px]"><path d="M5 0h2v5h5v2H7v5H5V7H0V5h5z" fill="#888" /></svg>
      <span className="ml-[17px] mr-[9px] w-[32px] text-[12px] text-[#c0c0c0]">100%</span>
    </div>
  )
}

export default function App() {
  return (
    <div className={`${ui} w-[1731px] h-[1080px] flex flex-col overflow-hidden bg-white`}>
      {/* Title bar */}
      <div className="h-[40px] shrink-0 bg-[#0070c6] flex items-center relative text-white">
        <svg width="8" height="10" viewBox="0 0 8 10" className="ml-[31px]">
          <path d="M1 1h6M1 4h6" stroke="#fff" />
          <path d="M1 6h6L4 9z" fill="#fff" />
        </svg>
        <div className="absolute left-0 right-0 text-center text-[15px] text-[#e4f0fa] -ml-[2px]">Cryoserver - Search&nbsp; -&nbsp; Outlook</div>
        <svg width="16" height="14" viewBox="0 0 16 14" fill="none" className="ml-auto">
          <rect x=".5" y=".5" width="15" height="13" stroke="#fff" />
          <rect x="1" y="1" width="14" height="3" fill="#cfe4f5" />
          <path d="M8 12V6M5.500 8L8 5.500 10.500 8" stroke="#fff" />
        </svg>
        <div className="ml-[44px] w-[14px] h-px bg-[#bcd9f0]" />
        <svg width="12" height="13" viewBox="0 0 12 13" fill="none" className="ml-[46px]">
          <path d="M.5 3h9v9.500h-9zM3 3V.5h8.500V10H9.500" stroke="#dceaf6" />
        </svg>
        <svg width="12" height="12" viewBox="0 0 12 12" fill="none" className="ml-[48px] mr-[24px]">
          <path d="M.5.5l11 11M11.500.5l-11 11" stroke="#e8f2fa" strokeWidth="1.100" />
        </svg>
      </div>
      {/* Tabs */}
      <div className="h-[40px] shrink-0 bg-[#0070c6] flex items-stretch text-[15px] text-[#dcebf8] whitespace-nowrap pl-[12px]">
        <div className="px-[14px] pt-[8px] leading-[24px]">File</div>
        <div className="ml-[13px] w-[70px] mt-[2px] text-center leading-[24px] pt-[6px] bg-[#f1f1f1] text-[#2a6fb8]">Home</div>
        <div className="ml-[16px] w-[100px] pt-[8px] leading-[24px]">Send / Receive</div>
        <div className="ml-[30px] w-[44px] pt-[8px] leading-[24px]">Folder</div>
        <div className="ml-[29px] w-[34px] pt-[8px] leading-[24px]">View</div>
        <div className="ml-[29px] w-[54px] pt-[8px] leading-[24px]">Add-ins</div>
        <div className="ml-[30px] w-[33px] pt-[8px] leading-[24px]">ESET</div>
        <div className="ml-[30px] w-[77px] pt-[8px] leading-[24px]">Adobe PDF</div>
        <div className="ml-[31px] pt-[11px]">
          <svg width="14" height="19" viewBox="0 0 14 19" fill="none">
            <path d="M4 13c0-3-3-4-3-7a6 6 0 0 1 12 0c0 3-3 4-3 7z" stroke="#fff" />
            <path d="M5 15h4M5.500 17.500h3" stroke="#fff" />
          </svg>
        </div>
        <div className="ml-[6px] pt-[8px] leading-[24px] tracking-[-0.1px]">Tell me what you want to do</div>
      </div>
      <Ribbon />
      <div className="flex-1 flex min-h-0">
        <Sidebar />
        <Main />
        <Scrollbar />
      </div>
      <StatusBar />
    </div>
  )
}
